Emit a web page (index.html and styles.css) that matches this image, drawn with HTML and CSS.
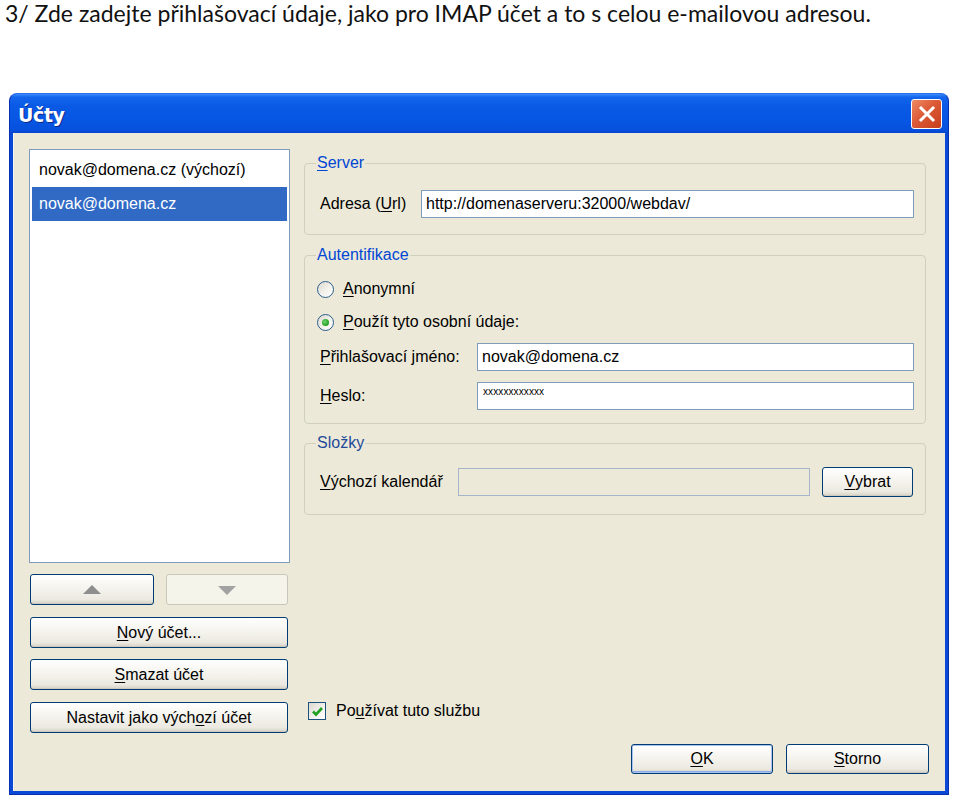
FILE: index.html
```html
<!DOCTYPE html>
<html lang="cs">
<head>
<meta charset="utf-8">
<title>Účty</title>
<link rel="stylesheet" href="styles.css">
</head>
<body>
<p class="caption">3/ Zde zadejte přihlašovací údaje, jako pro IMAP účet a to s celou e-mailovou adresou.</p>
<div class="window">
  <div class="titlebar">
    <span class="title">Účty</span>
    <span class="close">
      <svg width="18" height="18" viewBox="0 0 18 18"><path d="M3 3 L15 15 M15 3 L3 15" stroke="#fff" stroke-width="3" stroke-linecap="square"/></svg>
    </span>
  </div>
  <div class="client">
    <div class="left">
      <ul class="list">
        <li class="item">novak@domena.cz (výchozí)</li>
        <li class="item selected">novak@domena.cz</li>
      </ul>
      <div class="arrows">
        <button class="btn arrow-btn up"><svg width="18" height="10" viewBox="0 0 18 10"><polygon points="9,0 18,9 0,9" fill="#8e8e8e"/></svg></button>
        <button class="btn arrow-btn down disabled"><svg width="18" height="10" viewBox="0 0 18 10"><polygon points="0,1 18,1 9,10" fill="#a2a2a2"/></svg></button>
      </div>
      <button class="btn wide"><u>N</u>ový účet...</button>
      <button class="btn wide"><u>S</u>mazat účet</button>
      <button class="btn wide">Nastavit jako vých<u>o</u>zí účet</button>
    </div>
    <div class="right">
      <fieldset class="group server">
        <legend><u>S</u>erver</legend>
        <div class="row">
          <span class="lbl lbl-url">Adresa (<u>U</u>rl)</span>
          <span class="field">http://domenaserveru:32000/webdav/</span>
        </div>
      </fieldset>
      <fieldset class="group auth">
        <legend>Autentifikace</legend>
        <div class="opt">
          <span class="radio"></span>
          <span><u>A</u>nonymní</span>
        </div>
        <div class="opt opt2">
          <span class="radio checked"><span class="dot"></span></span>
          <span><u>P</u>oužít tyto osobní údaje:</span>
        </div>
        <div class="row row-user">
          <span class="lbl lbl-auth"><u>P</u>řihlašovací jméno:</span>
          <span class="field">novak@domena.cz</span>
        </div>
        <div class="row row-pw">
          <span class="lbl lbl-auth"><u>H</u>eslo:</span>
          <span class="field pw">xxxxxxxxxxxx</span>
        </div>
      </fieldset>
      <fieldset class="group folders">
        <legend>Složky</legend>
        <div class="row">
          <span class="lbl lbl-cal"><u>V</u>ýchozí kalendář</span>
          <span class="field disabled-field"></span>
          <button class="btn pick"><u>V</u>ybrat</button>
        </div>
      </fieldset>
      <div class="use">
        <span class="checkbox"><svg width="13" height="13" viewBox="0 0 13 13"><path d="M2 6.5 L5 9.5 L11 3" fill="none" stroke="#21a121" stroke-width="2.6"/></svg></span>
        <span>Po<u>u</u>žívat tuto službu</span>
      </div>
      <div class="dialog-buttons">
        <button class="btn dlg ok"><u>O</u>K</button>
        <button class="btn dlg"><u>S</u>torno</button>
      </div>
    </div>
  </div>
</div>
</body>
</html>
```
FILE: styles.css
```css
* { box-sizing: border-box; }
html, body { margin: 0; padding: 0; background: #fff; }
body {
  width: 960px;
  height: 801px;
  overflow: hidden;
  font-family: "Liberation Sans", Arial, sans-serif;
  font-size: 16px;
  color: #000;
}
.caption {
  margin: 0;
  padding: 0 0 0 5px;
  height: 30px;
  font-family: Lato, "Open Sans", sans-serif;
  font-size: 23px;
  line-height: 26px;
  color: #111;
  white-space: nowrap;
}
.window {
  margin: 63px 0 0 9px;
  width: 940px;
  height: 702px;
  display: flex;
  flex-direction: column;
  background: #0a48d6;
  border-radius: 8px 8px 0 0;
  border: 1px solid #0831b0;
  border-top-color: #2a6ff0;
}
.titlebar {
  flex: none;
  height: 39px;
  display: flex;
  align-items: center;
  justify-content: space-between;
  padding: 0 6px 0 8px;
  border-radius: 7px 7px 0 0;
  background: linear-gradient(to bottom, #3b8cfb 0%, #1465ec 8%, #0a5ae6 30%, #0756e3 70%, #0650dc 92%, #0646cf 100%);
}
.title {
  color: #fff;
  font-family: "DejaVu Sans", sans-serif;
  font-weight: bold;
  font-size: 19px;
  letter-spacing: -0.4px;
  padding-top: 3px;
  text-shadow: 1px 1px 0 #0b2a8a;
}
.close {
  width: 31px;
  height: 30px;
  display: flex;
  align-items: center;
  justify-content: center;
  border: 1px solid #fff;
  border-radius: 3px;
  background: linear-gradient(135deg, #ee8a66 0%, #dd5a36 45%, #c63e1c 100%);
  margin-top: 1px;
}
.client {
  flex: 1;
  margin: 0 3px 3px;
  background: #ece9d8;
  display: grid;
  grid-template-columns: 261px 625px;
  column-gap: 14px;
  padding: 16px 17px 0 15px;
  border-left: 1px solid #f6f4ec;
}
.left { display: flex; flex-direction: column; }
.list {
  margin: 0;
  padding: 3px 2px 0;
  list-style: none;
  height: 414px;
  background: #fff;
  border: 1px solid #7f9db9;
}
.item {
  height: 34px;
  line-height: 34px;
  padding-left: 7px;
  white-space: nowrap;
}
.item.selected { background: #316ac5; color: #fff; }
.btn {
  font-family: inherit;
  font-size: 16px;
  color: #000;
  height: 31px;
  padding: 0;
  border: 1px solid #003c74;
  border-radius: 3px;
  background: linear-gradient(to bottom, #ffffff 0%, #f6f5f0 40%, #ebe9e0 85%, #d6d0c5 100%);
  box-shadow: inset 0 -1px 0 #cdc9bd;
  display: flex;
  align-items: center;
  justify-content: center;
}
.btn.disabled {
  border-color: #c9c7ba;
  background: #f5f4ea;
  box-shadow: none;
}
.arrows { display: flex; gap: 12px; margin-top: 11px; padding-left: 1px; }
.arrow-btn.up { width: 124px; }
.arrow-btn.down { width: 122px; }
.wide { width: 258px; margin-left: 1px; margin-top: 12px; }
.wide + .wide { margin-top: 11px; }
.wide:last-child { margin-top: 12px; }
.right { display: flex; flex-direction: column; }
.group {
  margin: 0 3px 0 0;
  min-inline-size: 0;
  border: 1px solid #d0d0bf;
  border-radius: 4px;
  padding: 0 11px 0 14px;
}
.group legend {
  padding: 0 1px;
  margin-left: -3px;
  line-height: 18px;
  color: #0046d5;
}
.folders legend { color: #1f4b9b; }
.server { margin-top: 5px; padding-top: 18px; padding-bottom: 16px; }
.auth { margin-top: 11px; padding-top: 11px; padding-bottom: 13px; }
.folders { margin-top: 10px; padding-top: 15px; padding-bottom: 17px; }
.row { display: flex; align-items: center; }
.lbl { flex: none; white-space: nowrap; }
.lbl-url { width: 102px; padding-left: 1px; }
.lbl-auth { width: 158px; padding-left: 1px; }
.lbl-cal { width: 139px; padding-left: 1px; }
.field {
  flex: 1;
  height: 28px;
  line-height: 26px;
  border: 1px solid #7f9db9;
  background: #fff;
  padding-left: 4px;
  white-space: nowrap;
}
.field.pw {
  font-size: 10px;
  line-height: 12px;
  padding-top: 3px;
  padding-left: 5px;
  letter-spacing: 0.1px;
}
.disabled-field {
  flex: none;
  width: 352px;
  background: #ece9d8;
  border-color: #a6b5c9;
}
.pick { width: 91px; height: 30px; margin-left: 12px; }
.opt { display: flex; align-items: center; height: 28px; gap: 9px; }
.opt2 { margin-top: 5px; }
.row-user { margin-top: 7px; }
.row-pw { margin-top: 11px; }
.radio {
  flex: none;
  width: 17px;
  height: 17px;
  margin-left: -2px;
  border-radius: 50%;
  border: 1px solid #2b5f8e;
  background: linear-gradient(135deg, #dcd9cf 0%, #f3f2ec 55%, #ffffff 100%);
  display: flex;
  align-items: center;
  justify-content: center;
}
.dot {
  width: 7px;
  height: 7px;
  border-radius: 50%;
  background: radial-gradient(circle at 40% 40%, #6fd46f 0%, #2aa52a 60%, #1b861b 100%);
}
.use {
  display: flex;
  align-items: center;
  gap: 10px;
  margin-top: 187px;
  margin-left: 4px;
  height: 18px;
}
.checkbox {
  flex: none;
  width: 18px;
  height: 18px;
  border: 1px solid #1c5180;
  background: linear-gradient(135deg, #dcd9cf 0%, #f4f3ee 60%, #fff 100%);
  display: flex;
  align-items: center;
  justify-content: center;
}
.dialog-buttons {
  display: flex;
  justify-content: flex-end;
  gap: 13px;
  margin-top: 24px;
}
.dlg { width: 143px; height: 30px; }
.dlg.ok { width: 142px; border-color: #003c74; box-shadow: inset 0 0 0 1px #a7c2f0, inset 0 -2px 0 #89ade4; }
u { text-decoration: underline; text-underline-offset: 2px; }
```
